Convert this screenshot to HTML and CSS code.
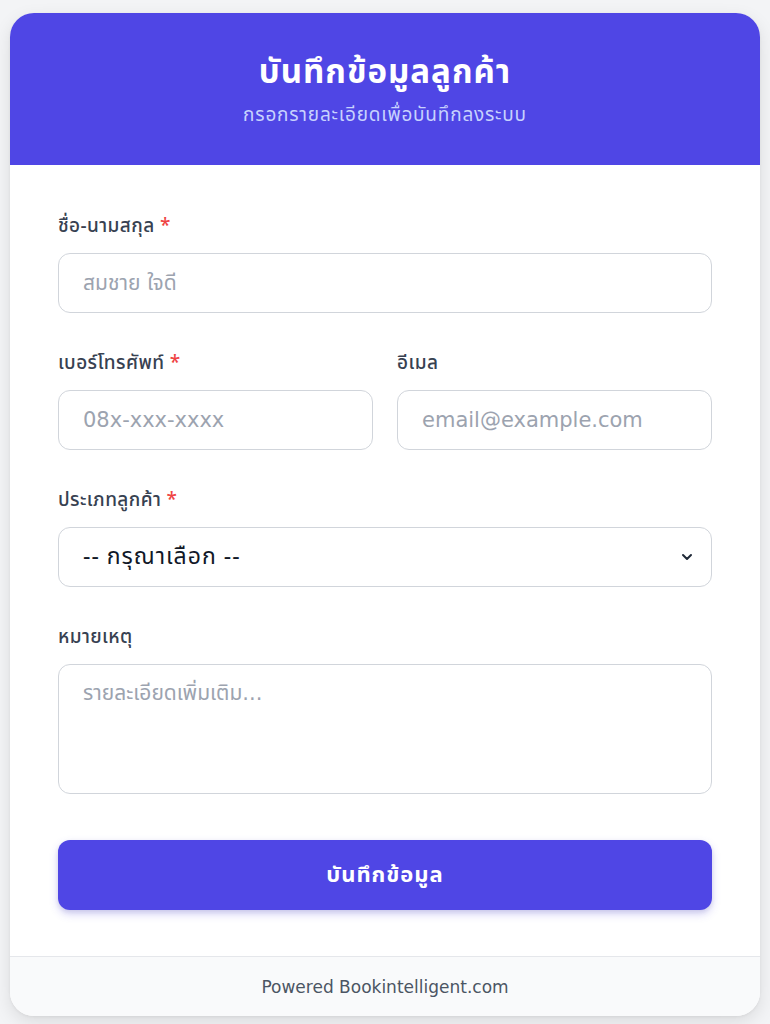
FILE: index.html
```html
<!DOCTYPE html>
<html lang="th">
<head>
<meta charset="utf-8">
<title>บันทึกข้อมูลลูกค้า</title>
<link rel="stylesheet" href="styles.css">
</head>
<body>
<div class="card">
  <header class="head">
    <h1 class="title">บันทึกข้อมูลลูกค้า</h1>
    <p class="subtitle">กรอกรายละเอียดเพื่อบันทึกลงระบบ</p>
  </header>
  <form class="form">
    <div class="group">
      <label class="label">ชื่อ-นามสกุล <span class="req">*</span></label>
      <input class="field" type="text" placeholder="สมชาย ใจดี">
    </div>
    <div class="row">
      <div class="group">
        <label class="label">เบอร์โทรศัพท์ <span class="req">*</span></label>
        <input class="field" type="text" placeholder="08x-xxx-xxxx">
      </div>
      <div class="group">
        <label class="label">อีเมล</label>
        <input class="field" type="text" placeholder="email@example.com">
      </div>
    </div>
    <div class="group">
      <label class="label">ประเภทลูกค้า <span class="req">*</span></label>
      <div class="select-wrap">
        <select class="field select">
          <option>-- กรุณาเลือก --</option>
        </select>
        <svg class="chev" width="14" height="14" viewBox="0 0 14 14" aria-hidden="true"><path d="M3 5l4 4 4-4" fill="none" stroke="#1f2937" stroke-width="2" stroke-linecap="round" stroke-linejoin="round"/></svg>
      </div>
    </div>
    <div class="group">
      <label class="label">หมายเหตุ</label>
      <textarea class="field area" placeholder="รายละเอียดเพิ่มเติม..."></textarea>
    </div>
    <button class="btn" type="button">บันทึกข้อมูล</button>
  </form>
  <footer class="foot">Powered Bookintelligent.com</footer>
</div>
</body>
</html>
```
FILE: styles.css
```css
* { box-sizing: border-box; }
html, body { margin: 0; padding: 0; }
body {
  background: #f3f4f6;
  font-family: "Noto Sans Thai", "Noto Sans", "DejaVu Sans", sans-serif;
  padding: 13px 10px 8px;
}
.card {
  background: #ffffff;
  border-radius: 24px;
  overflow: hidden;
  box-shadow: 0 6px 18px rgba(0,0,0,0.10), 0 1px 3px rgba(0,0,0,0.06);
}
.head {
  background: #4f46e5;
  height: 152px;
  text-align: center;
  padding-top: 38px;
}
.title {
  margin: 0;
  color: #ffffff;
  font-size: 33px;
  font-weight: 700;
  line-height: 44px;
  letter-spacing: 1px;
}
.subtitle {
  margin: 6px 0 0;
  color: #c7d2fe;
  font-size: 19px;
  font-weight: 400;
  line-height: 30px;
  letter-spacing: 0.8px;
}
.form {
  padding: 48px 48px 46px;
  display: flex;
  flex-direction: column;
}
.group {
  display: flex;
  flex-direction: column;
  margin-bottom: 37px;
}
.row {
  display: grid;
  grid-template-columns: 1fr 1fr;
  column-gap: 24px;
}
.label {
  font-size: 19px;
  font-weight: 500;
  color: #374151;
  line-height: 28px;
  margin-bottom: 12px;
  letter-spacing: 0.4px;
}
.req { color: #ef4444; }
.field {
  width: 100%;
  height: 60px;
  border: 1px solid #d1d5db;
  border-radius: 12px;
  padding: 0 24px;
  font-family: "DejaVu Sans", "Noto Sans Thai", sans-serif;
  font-size: 21px;
  font-weight: 400;
  color: #111827;
  background: #ffffff;
  outline: none;
}
.field::placeholder { color: #9ca3af; }
.select-wrap { position: relative; }
.select {
  appearance: none;
  -webkit-appearance: none;
  color: #111827;
  font-family: "Noto Sans Thai", sans-serif;
  font-size: 23px;
  font-weight: 400;
  letter-spacing: 1px;
}
.chev {
  position: absolute;
  right: 18px;
  top: 23px;
  pointer-events: none;
}
.area {
  height: 130px;
  padding: 12px 24px;
  resize: none;
  line-height: 32px;
  display: block;
}
.btn {
  margin-top: 9px;
  height: 70px;
  border: none;
  border-radius: 12px;
  background: #4f46e5;
  color: #ffffff;
  font-family: inherit;
  font-size: 22px;
  font-weight: 700;
  letter-spacing: 1px;
  box-shadow: 0 4px 8px rgba(79,70,229,0.25), 0 2px 4px rgba(0,0,0,0.08);
}
.foot {
  border-top: 1px solid #e5e7eb;
  background: #f9fafb;
  height: 60px;
  display: flex;
  align-items: center;
  justify-content: center;
  color: #4b5563;
  font-family: "DejaVu Sans", sans-serif;
  font-size: 17px;
}
```
